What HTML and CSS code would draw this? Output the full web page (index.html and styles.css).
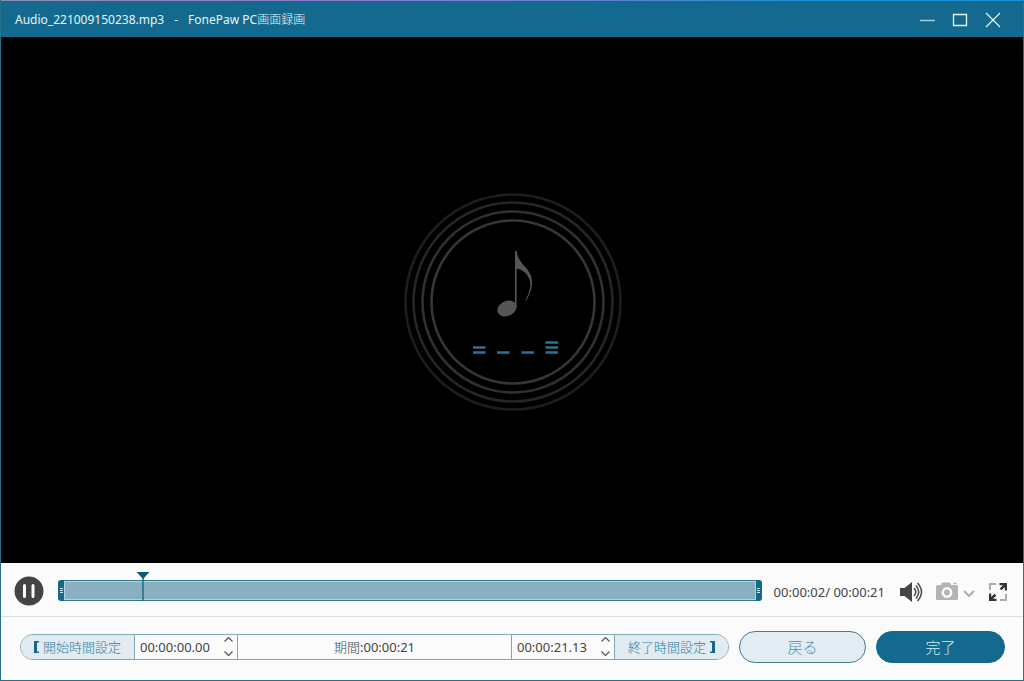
FILE: index.html
```html
<!DOCTYPE html>
<html lang="ja">
<head>
<meta charset="utf-8">
<title>Audio_221009150238.mp3 - FonePaw PC画面録画</title>
<link rel="stylesheet" href="styles.css">
</head>
<body>
<div class="window">
  <header class="titlebar">
    <h1 class="title"><span>Audio_221009150238.mp3</span><span>-</span><span>FonePaw PC<span class="light">画面録画</span></span></h1>
    <div class="window-buttons">
      <button class="icon-button" type="button" aria-label="最小化"><svg width="16" height="16" viewBox="0 0 16 16"><path d="M1 8.500h15" stroke="#a5d3e0" stroke-width="1.400" fill="none"/></svg></button>
      <button class="icon-button" type="button" aria-label="最大化"><svg width="16" height="16" viewBox="0 0 16 16"><path d="M1.500 2.500h13v11h-13z" stroke="#e4f6fa" stroke-width="1.300" fill="none"/></svg></button>
      <button class="icon-button" type="button" aria-label="閉じる"><svg width="16" height="16" viewBox="0 0 16 16"><path d="M1 1l14 14M15 1L1 15" stroke="#e4f6fa" stroke-width="1.200" fill="none"/></svg></button>
    </div>
  </header>

  <main class="stage">
    <svg class="disc" width="220" height="220" viewBox="0 0 220 220" aria-hidden="true">
      <g fill="none" stroke-width="2.600">
        <circle cx="110" cy="110" r="107.500" stroke="#1d1d1d"/>
        <circle cx="110" cy="110" r="99.500" stroke="#262626"/>
        <circle cx="110" cy="110" r="90.500" stroke="#303030"/>
        <circle cx="110" cy="110" r="81.500" stroke="#363636"/>
      </g>
      <g fill="#555">
        <ellipse cx="104" cy="116.500" rx="10" ry="7.500" transform="rotate(-24 104 116.500)"/>
        <path d="M112 59h1.800c.3 7 4 11 8.500 16 8 8.500 8.500 18 3.500 28.500l-2 4.500-1-.6c5-9.500 6-17 2.500-22.500-2.500-4.500-6-7.500-11.700-8.200V115H112z"/>
      </g>
      <path d="M70 155.500h12.500M70 160.500h12.500M94 160.500h12.500M118.500 160.500H131M142.500 150.500H155M142.500 155.500H155M142.500 160.500H155" stroke="#2a7593" stroke-width="2.400"/>
    </svg>
  </main>

  <section class="player">
    <button class="icon-button" type="button" aria-label="一時停止"><svg width="30" height="30" viewBox="0 0 30 30"><circle cx="15" cy="15" r="14.500" fill="#444"/><path d="M10.500 9.500v11M19 9.500v11" stroke="#fff" stroke-width="3" stroke-linecap="round"/></svg></button>
    <div class="timeline">
      <span class="handle"><i></i><i></i><i></i></span>
      <span class="range"></span>
      <span class="handle handle-end"><i></i><i></i><i></i></span>
      <svg class="playhead" style="left: 12.100%" width="13" height="29" viewBox="0 0 13 29"><path d="M0 0h13L6.500 7z" fill="#0c5a78"/><path d="M6.500 5v24" stroke="#176783" stroke-width="1.400"/></svg>
    </div>
    <output class="clock">00:00:02/ 00:00:21</output>
    <div class="tools">
      <button class="icon-button" type="button" aria-label="音量"><svg width="24" height="22" viewBox="0 0 24 22"><path d="M1 7h4.500L13 1v20l-7.500-6H1z" fill="#454545"/><path d="M15 7q3.500 4 0 8M17 4.500q5.500 6.500 0 13M18.500 2q8 9 0 18" fill="none" stroke="#4a4a4a" stroke-width="1.500"/></svg></button>
      <button class="icon-button" type="button" aria-label="スナップショット"><svg width="40" height="22" viewBox="0 0 40 22"><path d="M2.500 4H6L7 1.500h8L16 4h5.500q1.500 0 1.500 1.500v12q0 1.500-1.500 1.500h-19Q1 19 1 17.500v-12Q1 4 2.500 4z" fill="#b4b4b4"/><path d="M18.500 2.500h3" stroke="#b4b4b4" stroke-width="1.500"/><circle cx="12" cy="11.500" r="4.200" fill="#b4b4b4" stroke="#fff" stroke-width="2.400"/><path d="M29 10l5 5 5-5" fill="none" stroke="#aaa" stroke-width="1.800"/></svg></button>
      <button class="icon-button fullscreen" type="button" aria-label="全画面"><svg width="18" height="18" viewBox="0 0 18 18"><path d="M1 7V1h6M11 17h6v-6" fill="none" stroke="#aaa" stroke-width="1.900"/><path d="M10.500 0H18v7.500h-2.200V4L12.500 7.300 10.700 5.500 14 2.200h-3.500zM7.500 18H0v-7.500h2.200V14l3.300-3.300 1.800 1.800L4 15.800h3.500z" fill="#333"/></svg></button>
    </div>
  </section>

  <footer class="footer">
    <div class="trim">
      <button class="trim-button" type="button"><svg width="5" height="12" viewBox="0 0 5 12"><path d="M0 0h5v1.500H3v9h2V12H0z" fill="#15668a"/></svg>開始時間設定</button>
      <div class="spin">
        <input class="time" type="text" aria-label="開始時間" value="00:00:00.00">
        <div class="steps">
          <button class="icon-button" type="button" aria-label="開始を増やす"><svg width="9" height="5" viewBox="0 0 9 5"><path d="M.5 4.500l4-4 4 4" fill="none" stroke="#555" stroke-width="1.200"/></svg></button>
          <button class="icon-button" type="button" aria-label="開始を減らす"><svg width="9" height="5" viewBox="0 0 9 5"><path d="M.5.5l4 4 4-4" fill="none" stroke="#555" stroke-width="1.200"/></svg></button>
        </div>
      </div>
      <div class="duration"><span class="light">期間</span>:00:00:21</div>
      <div class="spin">
        <input class="time" type="text" aria-label="終了時間" value="00:00:21.13">
        <div class="steps">
          <button class="icon-button" type="button" aria-label="終了を増やす"><svg width="9" height="5" viewBox="0 0 9 5"><path d="M.5 4.500l4-4 4 4" fill="none" stroke="#555" stroke-width="1.200"/></svg></button>
          <button class="icon-button" type="button" aria-label="終了を減らす"><svg width="9" height="5" viewBox="0 0 9 5"><path d="M.5.5l4 4 4-4" fill="none" stroke="#555" stroke-width="1.200"/></svg></button>
        </div>
      </div>
      <button class="trim-button" type="button">終了時間設定<svg width="5" height="12" viewBox="0 0 5 12"><path d="M5 0H0v1.500h2v9H0V12h5z" fill="#15668a"/></svg></button>
    </div>
    <button class="action" type="button">戻る</button>
    <button class="action primary" type="button">完了</button>
  </footer>
</div>
</body>
</html>
```
FILE: styles.css
```css
* {
  box-sizing: border-box;
}

body {
  margin: 0;
  font: 13px/18px "Noto Sans", "Noto Sans CJK JP", sans-serif;
  color: #444;
}

button,
input {
  margin: 0;
  padding: 0;
  border: 0;
  background: none;
  color: inherit;
  font: inherit;
}

svg {
  display: block;
}

.light {
  font-weight: 300;
}

.icon-button {
  display: flex;
}

.window {
  display: flex;
  flex-direction: column;
  min-height: 100vh;
  border: 1px solid #29728c;
  border-top: 0;
  background: #fbfbfb;
}

.titlebar {
  display: flex;
  align-items: center;
  justify-content: space-between;
  height: 37px;
  padding: 2px 22px 0 14px;
  background: linear-gradient(90deg, #8d8fb0, #8a7bd0 35%, #5b82d8 60%, #1593d2 80%) top / 100% 1px no-repeat #136a8e;
  color: #e4f6fa;
}

.title {
  display: flex;
  gap: 10px;
  margin: 0;
  font-size: 12px;
  font-weight: 400;
}

.window-buttons {
  display: flex;
  gap: 17px;
}

.stage {
  display: flex;
  flex: 1;
  align-items: center;
  justify-content: center;
  padding: 3px 0 0 2px;
  background: #000;
}

.player {
  display: flex;
  align-items: center;
  height: 54px;
  padding: 2px 16px 0 13px;
  border-bottom: 1px solid #dcdfe1;
}

.timeline {
  position: relative;
  display: flex;
  flex: 1;
  height: 21px;
  margin: 0 12px 0 14px;
}

.handle {
  display: flex;
  flex-direction: column;
  align-items: center;
  justify-content: center;
  gap: 1px;
  width: 6px;
  border-radius: 3px 0 0 3px;
  background: #15688a;
}

.handle-end {
  border-radius: 0 3px 3px 0;
}

.handle i {
  width: 3px;
  height: 1px;
  background: #d5e9f0;
}

.range {
  flex: 1;
  border: solid #34788f;
  border-width: 1px 0;
  background: #8aafbe;
  box-shadow: inset 0 0 0 1px #b3d2dc;
}

.playhead {
  position: absolute;
  top: -8px;
  transform: translateX(-50%);
}

.clock {
  padding-top: 2px;
}

.tools {
  display: flex;
  align-items: center;
  gap: 12px;
  margin-left: 14px;
  padding-top: 2px;
}

.fullscreen {
  margin-left: 2px;
}

.footer {
  display: flex;
  align-items: center;
  gap: 10px;
  height: 63px;
  padding: 0 18px 4px 19px;
}

.trim {
  display: flex;
  flex: 1;
  height: 26px;
  overflow: hidden;
  border: 1px solid #7fa8b8;
  border-radius: 13px;
}

.trim-button {
  display: flex;
  align-items: center;
  justify-content: center;
  gap: 4px;
  width: 113px;
  background: #e1ebf1;
  color: #2d819d;
  font-weight: 300;
}

.spin {
  display: flex;
  align-items: center;
  width: 104px;
  padding: 0 4px 0 5px;
  border: solid #7fa8b8;
  border-width: 0 1px;
}

.time {
  flex: 1;
  min-width: 0;
}

.steps {
  display: flex;
  flex-direction: column;
  gap: 9px;
}

.duration {
  display: flex;
  flex: 1;
  align-items: center;
  justify-content: center;
}

.action {
  width: 127px;
  height: 32px;
  border: 1px solid #447d92;
  border-radius: 16px;
  background: #e3ecf2;
  color: #4f91a8;
  font-size: 15px;
  font-weight: 300;
}

.primary {
  width: 129px;
  border-color: #15688b;
  background: #136a8e;
  color: #d5edf4;
}
```
